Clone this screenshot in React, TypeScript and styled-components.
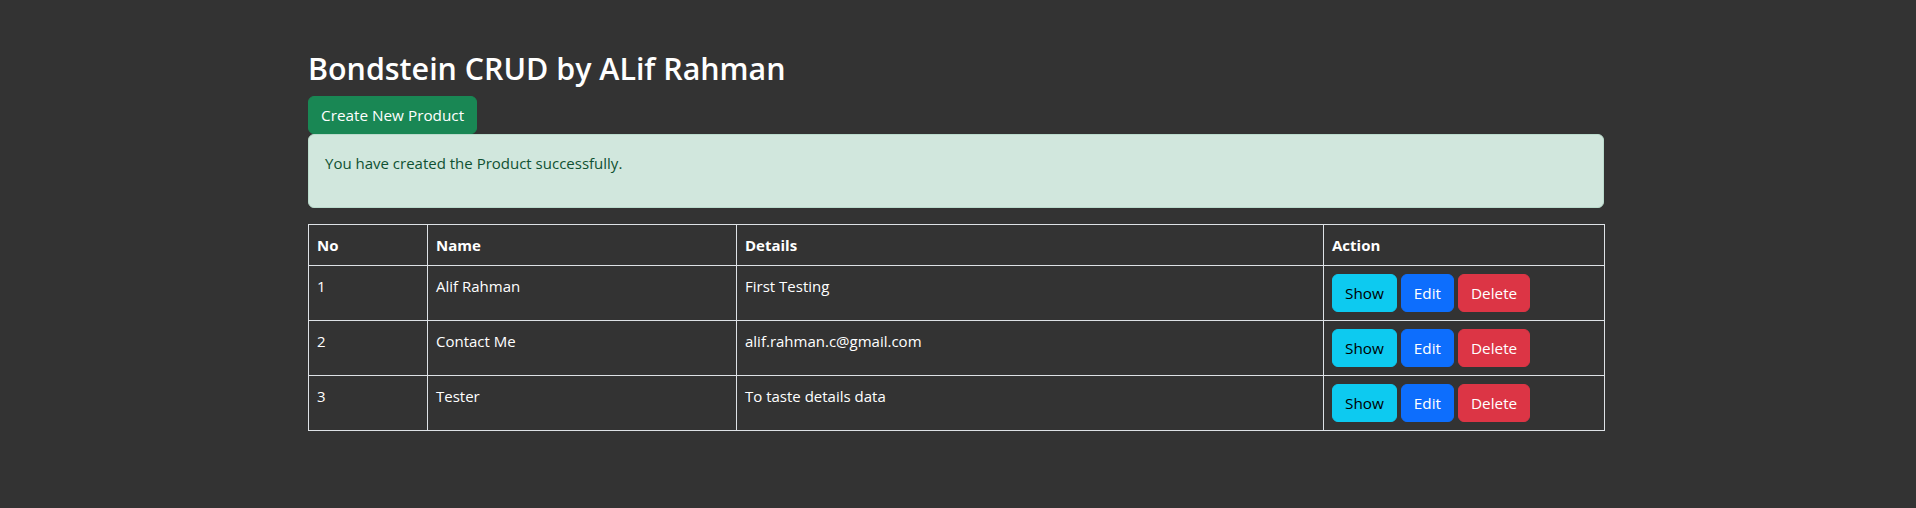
import React from "react";
import styled, { createGlobalStyle } from "styled-components";

const GlobalStyle = createGlobalStyle`
  html, body {
    margin: 0;
    padding: 0;
    background: #333333;
  }
  body {
    color: #ffffff;
    font-family: "Open Sans", "Noto Sans", "Liberation Sans", sans-serif;
    font-size: 15px;
    line-height: 24px;
  }
  * { box-sizing: border-box; }
`;

const Page = styled.div`
  padding: 50px 4px 40px 0;
`;

const Container = styled.div`
  width: 1296px;
  margin: 0 auto;
  display: flex;
  flex-direction: column;
  align-items: stretch;
`;

const Title = styled.h2`
  margin: 0 0 8px;
  font-size: 30.4px;
  line-height: 38px;
  font-weight: 600;
  color: #ffffff;
`;

type Variant = "success" | "info" | "primary" | "danger";

const variants: Record<Variant, { bg: string; fg: string }> = {
  success: { bg: "#198754", fg: "#ffffff" },
  info: { bg: "#0dcaf0", fg: "#000000" },
  primary: { bg: "#0d6efd", fg: "#ffffff" },
  danger: { bg: "#dc3545", fg: "#ffffff" },
};

const Button = styled.button<{ $variant: Variant }>`
  display: inline-block;
  padding: 6px 12px;
  border: 1px solid ${(p) => variants[p.$variant].bg};
  border-radius: 6px;
  background: ${(p) => variants[p.$variant].bg};
  color: ${(p) => variants[p.$variant].fg};
  font-family: inherit;
  font-size: 15.3px;
  line-height: 24px;
  font-weight: 400;
  cursor: pointer;
`;

const CreateButton = styled(Button)`
  align-self: flex-start;
`;

const Alert = styled.div`
  margin-bottom: 16px;
  padding: 16px;
  border: 1px solid #badbcc;
  border-radius: 6px;
  background: #d1e7dd;
  color: #0f5132;
`;

const AlertText = styled.p`
  margin: 0 0 16px;
`;

const Table = styled.table`
  width: 100%;
  table-layout: fixed;
  border-collapse: collapse;
  border: 1px solid #dee2e6;
  color: #ffffff;
`;

const HeadCell = styled.th`
  padding: 8px;
  border: 1px solid #dee2e6;
  text-align: left;
  vertical-align: top;
  font-weight: 700;
`;

const Cell = styled.td`
  padding: 8px;
  border: 1px solid #dee2e6;
  vertical-align: top;
`;

const Actions = styled.div`
  display: flex;
  gap: 4px;
`;

const rows = [
  { no: 1, name: "Alif Rahman", details: "First Testing" },
  { no: 2, name: "Contact Me", details: "alif.rahman.c@gmail.com" },
  { no: 3, name: "Tester", details: "To taste details data" },
];

export default function App() {
  return (
    <>
      <GlobalStyle />
      <Page>
        <Container>
          <Title>Bondstein CRUD by ALif Rahman</Title>
          <CreateButton $variant="success">Create New Product</CreateButton>
          <Alert>
            <AlertText>You have created the Product successfully.</AlertText>
          </Alert>
          <Table>
            <colgroup>
              <col style={{ width: 119 }} />
              <col style={{ width: 309 }} />
              <col style={{ width: 587 }} />
              <col style={{ width: 281 }} />
            </colgroup>
            <thead>
              <tr>
                <HeadCell>No</HeadCell>
                <HeadCell>Name</HeadCell>
                <HeadCell>Details</HeadCell>
                <HeadCell>Action</HeadCell>
              </tr>
            </thead>
            <tbody>
              {rows.map((r) => (
                <tr key={r.no}>
                  <Cell>{r.no}</Cell>
                  <Cell>{r.name}</Cell>
                  <Cell>{r.details}</Cell>
                  <Cell>
                    <Actions>
                      <Button $variant="info">Show</Button>
                      <Button $variant="primary">Edit</Button>
                      <Button $variant="danger">Delete</Button>
                    </Actions>
                  </Cell>
                </tr>
              ))}
            </tbody>
          </Table>
        </Container>
      </Page>
    </>
  );
}
